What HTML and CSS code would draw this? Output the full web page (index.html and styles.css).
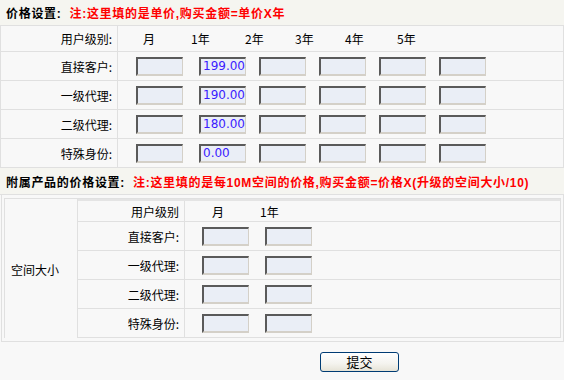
FILE: index.html
```html
<!DOCTYPE html>
<html>
<head>
<meta charset="utf-8">
<link rel="stylesheet" href="styles.css">
</head>
<body>
<div class="page">
  <div class="sec-title t1"><b class="blk">价格设置:</b><b class="red">注:这里填的是单价,购买金额=单价X年</b></div>
  <div class="grid">
    <div class="row hdr">
      <div class="lbl">用户级别:</div>
      <div class="vals heads">
        <span class="h hm">月</span><span class="h h1">1年</span><span class="h h2">2年</span><span class="h h3">3年</span><span class="h h4">4年</span><span class="h">5年</span>
      </div>
    </div>
    <div class="row">
      <div class="lbl">直接客户:</div>
      <div class="vals inputs">
        <input class="in first" value=""><input class="in" value="199.00"><input class="in" value=""><input class="in" value=""><input class="in" value=""><input class="in" value="">
      </div>
    </div>
    <div class="row">
      <div class="lbl">一级代理:</div>
      <div class="vals inputs">
        <input class="in first" value=""><input class="in" value="190.00"><input class="in" value=""><input class="in" value=""><input class="in" value=""><input class="in" value="">
      </div>
    </div>
    <div class="row">
      <div class="lbl">二级代理:</div>
      <div class="vals inputs">
        <input class="in first" value=""><input class="in" value="180.00"><input class="in" value=""><input class="in" value=""><input class="in" value=""><input class="in" value="">
      </div>
    </div>
    <div class="row">
      <div class="lbl">特殊身份:</div>
      <div class="vals inputs">
        <input class="in first" value=""><input class="in" value="0.00"><input class="in" value=""><input class="in" value=""><input class="in" value=""><input class="in" value="">
      </div>
    </div>
  </div>
  <div class="sec-title t2"><b class="blk">附属产品的价格设置:</b><b class="red">注:这里填的是每10M空间的价格,购买金额=价格X(升级的空间大小/10)</b></div>
  <div class="outer">
    <div class="inner">
      <div class="space">空间大小</div>
      <div class="sub">
        <div class="srow shdr">
          <div class="slbl">用户级别</div>
          <div class="svals heads"><span class="h shm">月</span><span class="h">1年</span></div>
        </div>
        <div class="srow">
          <div class="slbl">直接客户:</div>
          <div class="svals inputs"><input class="in sfirst" value=""><input class="in" value=""></div>
        </div>
        <div class="srow">
          <div class="slbl">一级代理:</div>
          <div class="svals inputs"><input class="in sfirst" value=""><input class="in" value=""></div>
        </div>
        <div class="srow">
          <div class="slbl">二级代理:</div>
          <div class="svals inputs"><input class="in sfirst" value=""><input class="in" value=""></div>
        </div>
        <div class="srow last">
          <div class="slbl">特殊身份:</div>
          <div class="svals inputs"><input class="in sfirst" value=""><input class="in" value=""></div>
        </div>
      </div>
    </div>
  </div>
  <div class="actions"><button class="btn">提交</button></div>
</div>
</body>
</html>
```
FILE: styles.css
```css
* { box-sizing: border-box; }
html, body { margin: 0; padding: 0; }
body {
  background: #f8f8f8;
  font-family: "Noto Sans CJK SC", "DejaVu Sans", sans-serif;
  font-size: 12px;
  color: #000;
  width: 564px;
  height: 380px;
  overflow: hidden;
}
.sec-title {
  display: flex;
  align-items: center;
  background: #f5f5f0;
  border-bottom: 1px solid #e0e0e0;
  padding-left: 6px;
  font-family: "Liberation Sans", "Noto Sans CJK SC", sans-serif;
  font-size: 12px;
  letter-spacing: 0.7px;
  white-space: nowrap;
}
.t1 { height: 26px; }
.t2 { height: 27px; }
.blk { color: #000; font-weight: bold; }
.red { color: #ff0000; font-weight: bold; }
.t1 .red { margin-left: 8px; }
.t2 .red { margin-left: 8px; }

.grid {
  border-left: 1px solid #e0e0e0;
  border-right: 1px solid #e0e0e0;
}
.row {
  display: flex;
  height: 29px;
  border-bottom: 1px solid #e0e0e0;
}
.row.hdr { height: 26px; }
.lbl {
  width: 117px;
  border-right: 1px solid #e0e0e0;
  text-align: right;
  padding-right: 5px;
  display: flex;
  align-items: center;
  justify-content: flex-end;
}
.vals {
  flex: 1;
  display: flex;
  align-items: center;
}
.heads .h { display: inline-block; }
.grid .heads { padding-left: 25px; }
.hm { width: 48px; }
.h1 { width: 54px; }
.h2 { width: 50px; }
.h3 { width: 50px; }
.h4 { width: 52px; }

.inputs { gap: 13px; }
.grid .inputs { padding-left: 18px; }
.in {
  width: 47px;
  height: 19px;
  margin: 0;
  padding: 0 0 0 2px;
  background: #eaeef6;
  border-top: 2px solid #5a5a5a;
  border-left: 2px solid #5a5a5a;
  border-right: 1px solid #d4d0c8;
  border-bottom: 2px solid #d4d0c8;
  font-family: "DejaVu Sans", sans-serif;
  font-size: 12px;
  color: #3a1cff;
  outline: none;
}
.in.first { margin-right: 3px; }

.outer {
  margin-left: 1px;
  border-left: 1px solid #e0e0e0;
  border-right: 1px solid #e0e0e0;
  border-bottom: 1px solid #e0e0e0;
  padding: 3px 2px 3px 2px;
}
.inner {
  display: flex;
  border: 1px solid #e0e0e0;
  border-bottom: none;
}
.space {
  width: 73px;
  border-right: 1px solid #e0e0e0;
  display: flex;
  align-items: center;
  padding-left: 6px;
  padding-top: 2px;
}
.sub { flex: 1; }
.srow {
  display: flex;
  height: 29px;
  border-bottom: 1px solid #e0e0e0;
}
.srow.shdr {
  height: 23px;
  border-top: 2px solid #e4e4e4;
}
.slbl {
  width: 107px;
  border-right: 1px solid #e0e0e0;
  display: flex;
  align-items: center;
  justify-content: flex-end;
  padding-right: 5px;
}
.svals {
  flex: 1;
  display: flex;
  align-items: center;
}
.sub .heads { padding-left: 27px; }
.shm { width: 48px; }
.sub .inputs { padding-left: 17px; gap: 16px; }

.actions {
  padding-top: 10px;
  padding-left: 320px;
}
.btn {
  width: 79px;
  height: 20px;
  margin: 0;
  padding: 0;
  border: 1px solid #003c74;
  border-radius: 3px;
  background: linear-gradient(#ffffff, #f4f3ee 60%, #e6e3d6);
  font-family: "Noto Sans CJK SC", sans-serif;
  font-size: 13px;
  line-height: 16px;
  color: #000;
}
```
